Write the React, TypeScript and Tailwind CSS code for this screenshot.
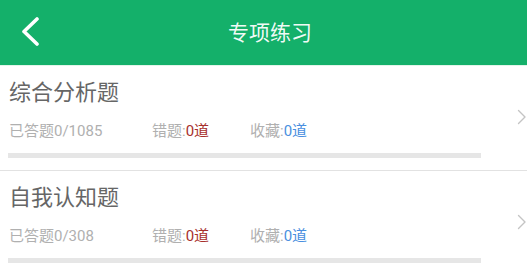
import React from "react";

const font = { fontFamily: '"Roboto", "Noto Sans CJK SC", sans-serif' };

type Item = { title: string; done: string };

const items: Item[] = [
  { title: "综合分析题", done: "已答题0/1085" },
  { title: "自我认知题", done: "已答题0/308" },
];

function Row({ item }: { item: Item }) {
  return (
    <div className="flex items-center border-b border-[#e2e2e2] h-[105px]">
      <div className="flex-1 flex flex-col pl-[9px] pt-[12px] pb-[12px]">
        <div className="text-[22px] leading-[30px] text-[#666666]">{item.title}</div>
        <div className="flex text-[15px] leading-[20px] mt-[13px] text-[#b0b0b0]">
          <span className="w-[143px]">{item.done}</span>
          <span className="w-[98px]">
            错题:<span className="text-[#a8302c]">0道</span>
          </span>
          <span>
            收藏:<span className="text-[#4a8fe0]">0道</span>
          </span>
        </div>
        <div className="mt-[12px] ml-[-1px] w-[473px] h-[5px] bg-[#e6e6e6]" />
      </div>
      <svg width="10" height="16" viewBox="0 0 10 16" className="mr-[0px] mt-[-2px]">
        <polyline
          points="1.5,1.5 8,8 1.5,14.5"
          fill="none"
          stroke="#c4c4c4"
          strokeWidth="1.4"
          strokeLinecap="round"
          strokeLinejoin="round"
        />
      </svg>
    </div>
  );
}

export default function App() {
  return (
    <div className="w-[527px] h-[272px] overflow-hidden bg-white" style={font}>
      <div className="flex items-center h-[65px] bg-[#14b06a] border-b border-[#e3f5ea] box-content">
        <div className="w-[60px] flex items-center">
          <svg width="20" height="30" viewBox="0 0 20 30" className="ml-[20px] mt-[-1px]">
            <polyline
              points="17,2 4,14.5 17,27"
              fill="none"
              stroke="#ffffff"
              strokeWidth="3.6"
              strokeLinecap="round"
              strokeLinejoin="round"
            />
          </svg>
        </div>
        <div className="flex-1 text-center text-[21px] leading-[30px] text-white/95">专项练习</div>
        <div className="w-[47px]" />
      </div>
      {items.map((it) => (
        <Row key={it.title} item={it} />
      ))}
    </div>
  );
}
